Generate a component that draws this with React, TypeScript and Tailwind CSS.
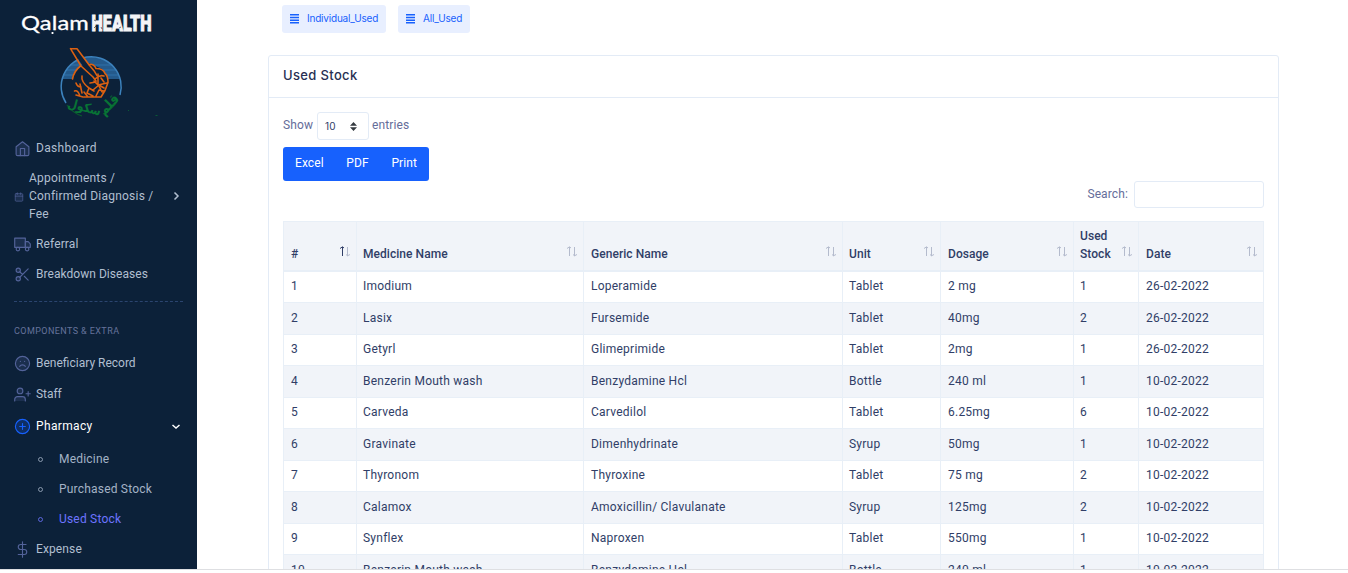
import React from "react";

type SubPath = { d: string; fill?: boolean };

const icons: Record<string, SubPath[]> = {
  home: [
    { d: "M3 9.5 12 2.5 21 9.5V20a2 2 0 0 1-2 2H5a2 2 0 0 1-2-2Z", fill: true },
    { d: "M9 22V12h6v10" },
  ],
  calendar: [
    { d: "M5 4h14a2 2 0 0 1 2 2v14a2 2 0 0 1-2 2H5a2 2 0 0 1-2-2V6a2 2 0 0 1 2-2Z", fill: true },
    { d: "M16 2v4M8 2v4M3 10h18" },
  ],
  truck: [
    { d: "M1 3h15v13H1Z", fill: true },
    { d: "M16 8h4l3 3v5h-7Z", fill: true },
    { d: "M8 18.5a2.5 2.5 0 1 1-5 0 2.5 2.5 0 0 1 5 0ZM21 18.5a2.5 2.5 0 1 1-5 0 2.5 2.5 0 0 1 5 0Z" },
  ],
  scissors: [
    { d: "M9 6a3 3 0 1 1-6 0 3 3 0 0 1 6 0ZM9 18a3 3 0 1 1-6 0 3 3 0 0 1 6 0Z", fill: true },
    { d: "M20 4 8.1 15.9M14.5 14.5 20 20M8.1 8.1 12 12" },
  ],
  frown: [
    { d: "M22 12a10 10 0 1 1-20 0 10 10 0 0 1 20 0Z", fill: true },
    { d: "M16 16s-1.5-2-4-2-4 2-4 2M9 9h.01M15 9h.01" },
  ],
  userPlus: [
    { d: "M16 21v-2a4 4 0 0 0-4-4H5a4 4 0 0 0-4 4v2", fill: true },
    { d: "M12.5 7a4 4 0 1 1-8 0 4 4 0 0 1 8 0Z", fill: true },
    { d: "M20 8v6M23 11h-6" },
  ],
  plusCircle: [
    { d: "M22 12a10 10 0 1 1-20 0 10 10 0 0 1 20 0Z", fill: true },
    { d: "M12 8v8M8 12h8" },
  ],
  dollar: [{ d: "M12 1v22M17 5H9.5a3.5 3.5 0 0 0 0 7h5a3.5 3.5 0 0 1 0 7H6" }],
};

function Icon({ name, className }: { name: string; className: string }) {
  return (
    <svg viewBox="0 0 24 24" className={`shrink-0 ${className}`} fill="none" stroke="currentColor" strokeWidth="1.6" strokeLinecap="round" strokeLinejoin="round">
      {icons[name].map((p) => (
        <path key={p.d} d={p.d} fill={p.fill ? "currentColor" : "none"} fillOpacity="0.22" />
      ))}
    </svg>
  );
}

function Brand() {
  return (
    <svg width="197" height="132" viewBox="0 0 197 132" className="shrink-0">
      <text x="21" y="30" textLength="68" lengthAdjust="spacingAndGlyphs" fontFamily="Lato, sans-serif" fontSize="20" fill="#fff" stroke="#fff" strokeWidth=".3">Qalam</text>
      <path d="M52.5 32v2" stroke="#fff" strokeWidth="1.8" />
      <text transform="translate(91.5 31) scale(.62 1)" textLength="97" lengthAdjust="spacingAndGlyphs" fontFamily="Roboto, sans-serif" fontWeight="900" fontSize="22" fill="#f3f4f6" stroke="#f3f4f6" strokeWidth="1">HEALTH</text>
      <path d="M94 20l2 1M94 28l2-2M101 27l1 2M112 21l1 2M119 28l2-1M132 26l-1 2M139 19l2 1M147 25l1 2" stroke="#0c2139" strokeWidth=".6" />
      <path d="M62 79a30 30 0 0 1 58 0Z" fill="#245a8c" />
      <path d="M70 65h42M66 70h50M64 75h54" stroke="#2f70a9" strokeWidth="1" />
      <path d="M66 103A30 30 0 1 1 120 95" fill="none" stroke="#3c82bd" strokeWidth="1.5" />
      <path d="M72 79c1-6 4-10 9-13l8-3 13 6 6 9-1 10-5 9H84l-5-9-2-9Z" fill="#0c2139" />
      <path d="M71 49h6l12 16-4 4Z" fill="#0c2139" />
      <g fill="none" stroke="#dc6112" strokeWidth="1.6" strokeLinejoin="round" strokeLinecap="round">
        <path d="M70.5 48.7H77l12 16 5 6 3 5M70.5 48.7 81 66l12 11 3 4M80.5 66c-4 3-7 7-8 13" />
        <path d="M89 64.5c3-1 6 1 7 4 5 0 8 2 9 5 3 2 3 6 3 9l-3 8-4 6.5H84M82 76c-1 5 3 9 7 12l5 3M76 83c1 3 3 4 5 4M80 84l2 9M74.5 91c3-1 4 1 5 4M76 95l7 2M84 92l4 5M89 88l-2 5 6 3M95 79c3-3 6-4 9-3M94 81l4 4 9-2M98 74v10l4 8M90 83l6-1M93 90l6-5 5 3M96 96l3-6 5 1M101 78l3 4" />
      </g>
      <path d="M67 105a29 29 0 0 0 15 11M103 114q10-5 15-14" fill="none" stroke="#0b592d" strokeWidth="1.2" />
      <g fontFamily="'DejaVu Sans', sans-serif" fill="#087335" fontWeight="700">
        <text transform="translate(67 107) rotate(15)" fontSize="13" textLength="34" lengthAdjust="spacingAndGlyphs">سکول</text>
        <text transform="translate(104 116) rotate(-46)" fontSize="14" textLength="23" lengthAdjust="spacingAndGlyphs">قلم</text>
      </g>
      <path d="M128.5 110v1M155.500 115.5h2" stroke="#087335" strokeOpacity=".7" />
    </svg>
  );
}

function Chevron({ down }: { down?: boolean }) {
  return (
    <svg width="10" height="10" viewBox="0 0 10 10" className="shrink-0" fill="none" stroke="currentColor" strokeWidth="1.5">
      <path d={down ? "M1.5 4 5 7 8.5 4" : "M3.5 1.5 7 5 3.5 8.5"} />
    </svg>
  );
}

function MenuItem({ icon, label, className, active }: { icon: string; label: string; className: string; active?: boolean }) {
  return (
    <a className={`flex items-center pr-4 pl-3.5 ${className} ${active ? "text-white" : "text-[#b1bfd0]"}`}>
      <Icon name={icon} className={`mt-px mr-[5px] size-[17px] ${active ? "text-[#1761fd]" : "text-[#53639a]"}`} />
      <span className="flex-1">{label}</span>
      {active && <Chevron down />}
    </a>
  );
}

function Sidebar() {
  return (
    <aside className="flex w-[197px] shrink-0 flex-col bg-[#0c2139] text-[12px] tracking-[0.12px]">
      <Brand />
      <MenuItem icon="home" label="Dashboard" className="h-8 tracking-[0.3px]" />
      <a className="flex h-[65px] items-center pr-4 pb-0.5 pl-3.5 tracking-[0.22px] text-[#b1bfd0]">
        <Icon name="calendar" className="mt-0.5 mr-[5px] size-2.5 text-[#53639a]" />
        <span className="flex-1 leading-[18px]">Appointments /<br />Confirmed Diagnosis /<br />Fee</span>
        <Chevron />
      </a>
      <MenuItem icon="truck" label="Referral" className="h-[30px]" />
      <MenuItem icon="scissors" label="Breakdown Diseases" className="h-[30px] tracking-[0.04px]" />
      <div className="mx-3.5 mt-3 border-t border-dashed border-[#2b456f]" />
      <h2 className="mt-[22px] ml-3.5 h-[14px] text-[9px] leading-[14px] tracking-[0.42px] text-[#66739b]">COMPONENTS &amp; EXTRA</h2>
      <MenuItem icon="frown" label="Beneficiary Record" className="mt-[9px] h-[31px] tracking-normal" />
      <MenuItem icon="userPlus" label="Staff" className="h-[31px] tracking-[-0.05px]" />
      <MenuItem icon="plusCircle" label="Pharmacy" className="mt-px h-8 tracking-[0.35px]" active />
      <ul className="pt-0.5 tracking-[0.2px]">
        {["Medicine", "Purchased Stock", "Used Stock"].map((s) => (
          <li key={s} className={`flex h-[30px] items-center pl-[38px] ${s === "Used Stock" ? "text-[#6d74ff]" : "text-[#a4b3c6]"}`}>
            <span className="mt-px mr-4 size-[5px] rounded-full border border-current opacity-80" />
            {s}
          </li>
        ))}
      </ul>
      <MenuItem icon="dollar" label="Expense" className="h-[30px]" />
    </aside>
  );
}

function SortArrows({ asc }: { asc?: boolean }) {
  return (
    <svg width="12" height="11" viewBox="0 0 12 11" className="mb-1.5 shrink-0" fill="none" strokeWidth="1">
      <path d="M3.5 10V1M1 2.5 3.5 .8 5 2" stroke={asc ? "#303e67" : "#b4bbcd"} />
      <path d="M8.5 1v9M7 8.5 8.5 9.8 11 8.5" stroke="#b4bbcd" />
    </svg>
  );
}

const columns = ["#", "Medicine Name", "Generic Name", "Unit", "Dosage", "Used Stock", "Date"];
const widths = ["w-[73px]", "w-[227px]", "w-[259px]", "w-[98px]", "w-[133px]", "w-[65px]", "w-[126px]"];
const insets = ["pl-[7px]", "pl-1.5", "pl-[7px]", "pl-1.5", "pl-[7px]", "pl-1.5", "pl-[7px]"];
const rows = [
  ["1", "Imodium", "Loperamide", "Tablet", "2 mg", "1", "26-02-2022"],
  ["2", "Lasix", "Fursemide", "Tablet", "40mg", "2", "26-02-2022"],
  ["3", "Getyrl", "Glimeprimide", "Tablet", "2mg", "1", "26-02-2022"],
  ["4", "Benzerin Mouth wash", "Benzydamine Hcl", "Bottle", "240 ml", "1", "10-02-2022"],
  ["5", "Carveda", "Carvedilol", "Tablet", "6.25mg", "6", "10-02-2022"],
  ["6", "Gravinate", "Dimenhydrinate", "Syrup", "50mg", "1", "10-02-2022"],
  ["7", "Thyronom", "Thyroxine", "Tablet", "75 mg", "2", "10-02-2022"],
  ["8", "Calamox", "Amoxicillin/ Clavulanate", "Syrup", "125mg", "2", "10-02-2022"],
  ["9", "Synflex", "Naproxen", "Tablet", "550mg", "1", "10-02-2022"],
  ["10", "Benzerin Mouth wash", "Benzydamine Hcl", "Bottle", "240 ml", "1", "10-02-2022"],
];

function StockTable() {
  return (
    <table className="w-[981px] table-fixed border-separate border-spacing-0 text-left text-[12px] tracking-[0.24px] text-[#303e67]">
      <thead>
        <tr className="h-[50.5px] bg-[#f1f4f9]">
          {columns.map((c, i) => (
            <th key={c} className={`${widths[i]} ${insets[i]} border-t border-b-2 border-l border-[#e8eff7] py-0 pr-[5px] align-bottom font-medium tracking-[0.05px] last:border-r`}>
              <div className="flex items-end justify-between pb-[7px] leading-[18px]">
                <span>{c}</span>
                <SortArrows asc={i === 0} />
              </div>
            </th>
          ))}
        </tr>
      </thead>
      <tbody>
        {rows.map((r) => (
          <tr key={r[0]} className="h-[31.5px] even:bg-[#f1f4f9]">
            {r.map((v, i) => (
              <td key={i} className={`${insets[i]} border-b border-l border-[#e8eff7] pt-0 pr-2 pb-px leading-[18px] last:border-r`}>{v}</td>
            ))}
          </tr>
        ))}
      </tbody>
    </table>
  );
}

function TabButton({ label }: { label: string }) {
  return (
    <button className="flex h-7 items-center rounded-[3px] bg-[#e8efff] px-2 pb-px text-[10px] tracking-[-0.2px] text-[#1761fd]">
      <svg width="9" height="10" viewBox="0 0 9 10" className="mr-2 shrink-0" fill="currentColor">
        <path d="M0 0h9v1.5H0ZM0 2.7h9v1.5H0ZM0 5.4h9v1.5H0ZM0 8.1h9v1.5H0Z" />
      </svg>
      {label}
    </button>
  );
}

export default function App() {
  return (
    <div className="h-[573px] w-[1348px] overflow-hidden bg-white font-['Roboto',sans-serif]">
      <div className="flex h-[569px] overflow-hidden">
        <Sidebar />
        <main className="flex-1 pl-[71px]">
          <div className="flex gap-3 pt-[5px] pl-3.5 font-['Inter',sans-serif]">
            <TabButton label="Individual_Used" />
            <TabButton label="All_Used" />
          </div>
          <section className="mt-[22px] h-[620px] w-[1011px] rounded-[3px] border border-[#e3ebf6]">
            <h1 className="flex h-[42px] items-center border-b border-[#e3ebf6] pb-px pl-3.5 font-['Inter',sans-serif] text-[13px] font-medium tracking-[0.35px] text-[#282f53]">Used Stock</h1>
            <div className="px-3.5 pt-3.5 text-[12px] tracking-[0.12px] text-[#656d9a]">
              <div className="flex h-7 items-center">
                <span className="-mt-0.5 w-[30px]">Show</span>
                <div className="mr-[3px] ml-1 flex h-7 w-[52px] items-center justify-between rounded-[3px] border border-[#e3ebf6] pr-[11px] pl-[7px] font-['Inter',sans-serif] text-[10px] text-[#303e67]">
                  10
                  <svg width="7" height="9" viewBox="0 0 7 9" fill="#343a40"><path d="M0 3.8 3.5 0 7 3.8ZM0 5.2h7L3.5 9Z" /></svg>
                </div>
                <span className="-mt-0.5">entries</span>
              </div>
              <div className="mt-[7px] flex h-[34px] w-[146px] items-center justify-between rounded-[3px] bg-[#1761fd] px-3 pb-0.5 tracking-[0.1px] text-white">
                <span>Excel</span><span>PDF</span><span>Print</span>
              </div>
              <div className="mb-[13px] flex h-[27px] items-center justify-end gap-1.5">
                <span className="pb-0.5">Search:</span>
                <div className="h-[27px] w-[130px] rounded-[3px] border border-[#e3ebf6]" />
              </div>
              <StockTable />
            </div>
          </section>
        </main>
      </div>
      <div className="h-px bg-[#dedfe2]" />
    </div>
  );
}
